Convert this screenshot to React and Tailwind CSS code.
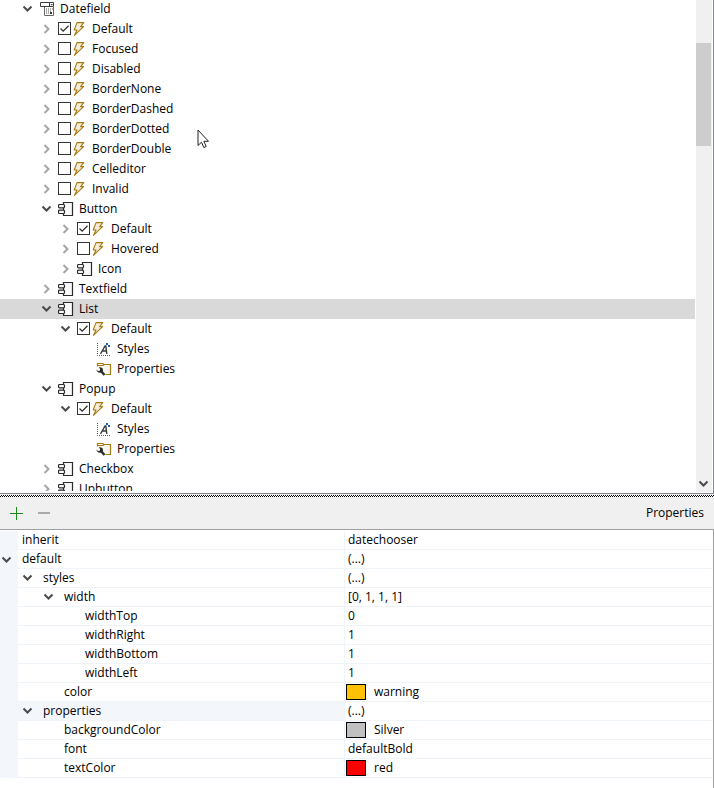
import { useState } from 'react';

const treeItems = [
  { id: 'datefield', label: 'Datefield', level: 0, icon: 'date', open: true },
  { id: 'df-default', label: 'Default', level: 1, icon: 'state', checked: true },
  { id: 'df-focused', label: 'Focused', level: 1, icon: 'state' },
  { id: 'df-disabled', label: 'Disabled', level: 1, icon: 'state' },
  { id: 'df-none', label: 'BorderNone', level: 1, icon: 'state' },
  { id: 'df-dashed', label: 'BorderDashed', level: 1, icon: 'state' },
  { id: 'df-dotted', label: 'BorderDotted', level: 1, icon: 'state' },
  { id: 'df-double', label: 'BorderDouble', level: 1, icon: 'state' },
  { id: 'df-celleditor', label: 'Celleditor', level: 1, icon: 'state' },
  { id: 'df-invalid', label: 'Invalid', level: 1, icon: 'state' },
  { id: 'button', label: 'Button', level: 1, icon: 'part', open: true },
  { id: 'btn-default', label: 'Default', level: 2, icon: 'state', checked: true },
  { id: 'btn-hovered', label: 'Hovered', level: 2, icon: 'state' },
  { id: 'btn-icon', label: 'Icon', level: 2, icon: 'part' },
  { id: 'textfield', label: 'Textfield', level: 1, icon: 'part' },
  { id: 'list', label: 'List', level: 1, icon: 'part', open: true },
  { id: 'list-default', label: 'Default', level: 2, icon: 'state', checked: true, open: true },
  { id: 'list-styles', label: 'Styles', level: 3, icon: 'styles', leaf: true },
  { id: 'list-props', label: 'Properties', level: 3, icon: 'props', leaf: true },
  { id: 'popup', label: 'Popup', level: 1, icon: 'part', open: true },
  { id: 'popup-default', label: 'Default', level: 2, icon: 'state', checked: true, open: true },
  { id: 'popup-styles', label: 'Styles', level: 3, icon: 'styles', leaf: true },
  { id: 'popup-props', label: 'Properties', level: 3, icon: 'props', leaf: true },
  { id: 'checkbox', label: 'Checkbox', level: 1, icon: 'part' },
  { id: 'upbutton', label: 'Upbutton', level: 1, icon: 'part' },
];

const properties = [
  { name: 'inherit', value: 'datechooser', level: 0 },
  { name: 'default', value: '(...)', level: 0, open: true },
  { name: 'styles', value: '(...)', level: 1, open: true },
  { name: 'width', value: '[0, 1, 1, 1]', level: 2, open: true },
  { name: 'widthTop', value: '0', level: 3 },
  { name: 'widthRight', value: '1', level: 3 },
  { name: 'widthBottom', value: '1', level: 3 },
  { name: 'widthLeft', value: '1', level: 3 },
  { name: 'color', value: 'warning', level: 2, swatch: 'bg-[#ffc107]' },
  { name: 'properties', value: '(...)', level: 1, open: true, group: true },
  { name: 'backgroundColor', value: 'Silver', level: 2, swatch: 'bg-[#c0c0c0]' },
  { name: 'font', value: 'defaultBold', level: 2 },
  { name: 'textColor', value: 'red', level: 2, swatch: 'bg-[#ff0000]' },
];

const treeIndent = ['pl-[20px]', 'pl-[39px]', 'pl-[58px]', 'pl-[77px]'];
const nameIndent = ['pl-[4px]', 'pl-[25px]', 'pl-[46px]', 'pl-[67px]'];
// rows with a chevron start one chevron slot earlier
const toggleIndent = ['', 'pl-[2px]', 'pl-[23px]'];

const Chevron = ({ open }) => (
  <svg width="16" height="16" viewBox="0 0 16 16" fill="none" strokeWidth="2" className="block">
    {open ? (
      <path d="M3.5 5.500l4 4 4-4" stroke="#4a4a4a" />
    ) : (
      <path d="M5.500 4l4 4-4 4" stroke="#a6a6a6" />
    )}
  </svg>
);

const BoltIcon = () => (
  <svg width="12" height="14" viewBox="0 0 12 14" className="block shrink-0">
    <path
      d="M4 .6H10.8L7.600 4.600H10.600L1.400 13.400L4 8H1.200Z"
      fill="#f3ecdc"
      stroke="#a67c12"
      strokeWidth="1.1"
      strokeLinejoin="round"
    />
  </svg>
);

const PartIcon = () => (
  <svg width="16" height="16" viewBox="0 0 16 16" fill="#f8f8f8" stroke="#2b2b2b" className="block">
    <path d="M5.5 4V1.5h9v13h-9V12M5.5 7v2" strokeWidth="1.2" />
    <rect x="0.5" y="3.5" width="6" height="3.3" rx="1" strokeWidth="1.2" />
    <rect x="0.5" y="9.2" width="6" height="3.3" rx="1" strokeWidth="1.2" />
  </svg>
);

const DateIcon = () => (
  <svg width="16" height="16" viewBox="0 0 16 16" fill="none" className="block">
    <path d="M1.5 1.5h13v4h-13zM10.500 1.500v4" stroke="#3c3c3c" />
    <path d="M11.500 3h2.500l-1.250 1.500z" fill="#3c3c3c" />
    <path d="M5.500 6v8.500h9v-9" stroke="#6a6a6a" />
    <path d="M7 8h1M9 8h1M11 8h1M13 8h1M7 10h1M9 10h1M11 10h1M7 12h1M9 12h1" stroke="#555" />
    <path d="M11 11h2v2h-2z" fill="#333" />
  </svg>
);

const StylesIcon = () => (
  <svg width="16" height="16" viewBox="0 0 16 16" fill="none" className="block">
    <path d="M1.5 2v12.5H14" stroke="#555" strokeDasharray="1 1" />
    <path d="M4.500 13L9 5h.8l1 8M6.500 10h4" stroke="#3a3a3a" strokeWidth="1.4" />
    <path d="M10 2h2v2h-2zM12 4h2v2h-2z" fill="#1565b8" />
  </svg>
);

const PropsIcon = () => (
  <svg width="16" height="16" viewBox="0 0 16 16" fill="none" className="block">
    <path d="M1.500 2.500h6v2h7v9h-6l-5-5h-2z" fill="#f8f6f0" />
    <path d="M1.500 5.500v-3h5.500l1 1h6.500v10h-5M1.500 4.500h5.500l1-1" stroke="#a67c12" strokeWidth="1.2" />
    <path d="M4.500 9.500L8.500 14" stroke="#2b2b2b" strokeWidth="2.4" />
    <path d="M.500 8.500l1.500 1.500 1.800-.3.400-1.700L3 6.500c2-.500 4 .5 4 2.700 0 1.800-1.500 2.800-3 2.600C2 11.700.400 10.500.500 8.500z" fill="#2b2b2b" />
  </svg>
);

const icons = { part: PartIcon, date: DateIcon, styles: StylesIcon, props: PropsIcon };

const StateMark = ({ id, label, checked }) => {
  const [on, setOn] = useState(Boolean(checked));

  return (
    <>
      <span className="relative mb-px block h-[13px] w-[13px] shrink-0">
        <input
          id={id}
          type="checkbox"
          checked={on}
          onChange={() => setOn(!on)}
          className="block h-[13px] w-[13px] appearance-none border border-[#333333] bg-white"
        />
        {on && (
          <svg width="13" height="13" viewBox="0 0 13 13" className="pointer-events-none absolute inset-0">
            <path d="M2.5 6.5l2.7 2.7 5.3-5.4" fill="none" stroke="#333" strokeWidth="1.3" />
          </svg>
        )}
      </span>
      <span className="ml-[2px] mr-[7px]">
        <BoltIcon />
      </span>
      <label htmlFor={id}>{label}</label>
    </>
  );
};

const TreeRow = ({ item, selected, onSelect }) => {
  const Icon = icons[item.icon];

  return (
    <li
      onClick={onSelect}
      className={`flex h-5 items-center ${treeIndent[item.level]} ${selected ? 'bg-[#d9d9d9]' : ''}`}
    >
      {item.leaf ? (
        <span className="w-4 shrink-0" />
      ) : (
        <button type="button" aria-label={`Toggle ${item.label}`} className="shrink-0">
          <Chevron open={item.open} />
        </button>
      )}
      <span className="ml-[3px] flex items-center">
        {item.icon === 'state' ? (
          <StateMark id={item.id} label={item.label} checked={item.checked} />
        ) : (
          <>
            <Icon />
            <span className="ml-[5px]">{item.label}</span>
          </>
        )}
      </span>
    </li>
  );
};

const PropertyRow = ({ row }) => {
  const toggle = row.open && (
    <button type="button" aria-label={`Toggle ${row.name}`} className="shrink-0">
      <Chevron open />
    </button>
  );
  const inlineToggle = row.open && row.level > 0;

  return (
    <tr className="h-[19px]">
      <td className="bg-[#f3f7fc] p-0">
        {row.level === 0 && <div className="-ml-px flex h-[18px] items-center">{toggle}</div>}
      </td>
      <td className={`border-b border-r border-[#eff3fa] p-0 ${row.group ? 'bg-[#f3f7fc]' : ''}`}>
        <div
          className={`flex h-[18px] items-center gap-[7px] ${
            inlineToggle ? toggleIndent[row.level] : nameIndent[row.level]
          }`}
        >
          {inlineToggle && toggle}
          {row.name}
        </div>
      </td>
      <td className="border-b border-[#eff3fa] p-0">
        {row.swatch ? (
          <div className="flex h-[18px] items-center gap-2 pl-px">
            <span className={`h-4 w-5 border border-black ${row.swatch}`} />
            {row.value}
          </div>
        ) : (
          <div className="flex h-[18px] items-center pl-[3px]">{row.value}</div>
        )}
      </td>
    </tr>
  );
};

const App = () => {
  const [selected, setSelected] = useState('list');

  return (
    <div className="relative flex h-screen flex-col bg-white font-['Open_Sans','Noto_Sans',sans-serif] text-[12px] leading-[18px] text-black">
      <section className="flex min-h-0 flex-1 border-b border-r border-[#828790] pb-px pr-px">
        <ul className="-mt-px mb-px mr-px min-w-0 flex-1 overflow-hidden">
          {treeItems.map((item) => (
            <TreeRow
              key={item.id}
              item={item}
              selected={selected === item.id}
              onSelect={() => setSelected(item.id)}
            />
          ))}
        </ul>
        <div className="flex w-4 flex-col bg-[#f0f0f0]">
          <div className="mt-[43px] h-[103px] w-[15px] bg-[#cdcdcd]" />
          <button type="button" aria-label="Scroll down" className="mt-auto">
            <Chevron open />
          </button>
        </div>
      </section>

      <section className="bg-[#f0f0f0] pt-px">
        <div className="h-[2px] bg-[repeating-conic-gradient(#000_0_25%,#fff_0_50%)] bg-[length:2px_2px]" />
        <header className="flex h-8 items-center px-2">
          <button type="button" aria-label="Add">
            <svg width="16" height="16" viewBox="0 0 16 16" className="block">
              <path d="M8.5 2v13M2 8.5h13" stroke="#1e8a1e" />
            </svg>
          </button>
          <button type="button" aria-label="Remove" className="ml-3">
            <svg width="16" height="16" viewBox="0 0 16 16" className="block">
              <path d="M2 8h12" stroke="#aaaaaa" strokeWidth="2" />
            </svg>
          </button>
          <h2 className="ml-auto mr-[2px]">Properties</h2>
        </header>
      </section>

      <section className="border-r border-t border-[#a0a0a0] pb-[10px] pt-px">
        <table className="w-full table-fixed border-separate border-spacing-0">
          <colgroup>
            <col className="w-[18px]" />
            <col className="w-[327px]" />
            <col />
          </colgroup>
          <tbody>
            {properties.map((row) => (
              <PropertyRow key={row.name} row={row} />
            ))}
          </tbody>
        </table>
      </section>

      <svg width="12" height="20" viewBox="0 0 12 20" className="pointer-events-none absolute left-[197px] top-[129px]">
        <path
          d="M1 1v15.5l3.500-3.300 2.300 5.300 2.400-1-2.300-5.200h4.600z"
          fill="#fff"
          stroke="#222"
          strokeWidth="1"
        />
      </svg>
    </div>
  );
};

export default App;
